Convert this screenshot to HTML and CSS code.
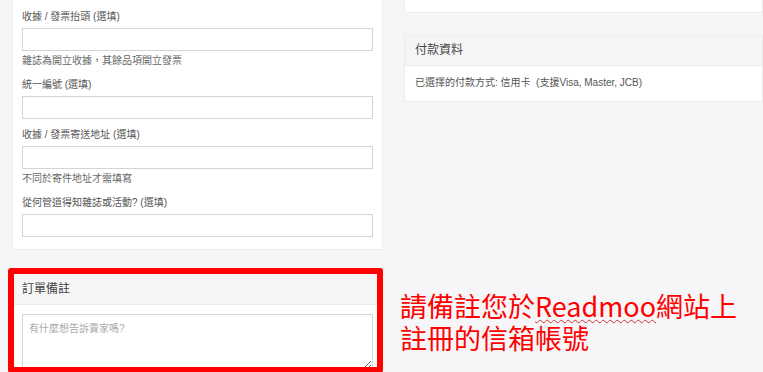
FILE: index.html
```html
<!DOCTYPE html>
<html lang="zh-Hant">
<head>
  <meta charset="UTF-8">
  <title>結帳</title>
  <link rel="stylesheet" href="styles.css">
</head>
<body>
  <div class="page">
    <div class="col-left">
      <div class="card form-card">
        <div class="field">
          <label class="label">收據 / 發票抬頭 (選填)</label>
          <input class="input" type="text">
          <p class="help">雜誌為開立收據，其餘品項開立發票</p>
        </div>
        <div class="field">
          <label class="label">統一編號 (選填)</label>
          <input class="input" type="text">
        </div>
        <div class="field">
          <label class="label">收據 / 發票寄送地址 (選填)</label>
          <input class="input" type="text">
          <p class="help">不同於寄件地址才需填寫</p>
        </div>
        <div class="field">
          <label class="label">從何管道得知雜誌或活動? (選填)</label>
          <input class="input" type="text">
        </div>
      </div>
      <div class="card note-card">
        <div class="card-head">訂單備註</div>
        <div class="card-body">
          <textarea class="textarea" placeholder="有什麼想告訴賣家嗎?"></textarea>
        </div>
        <div class="mark"></div>
      </div>
    </div>
    <div class="col-right">
      <div class="card top-card"></div>
      <div class="card pay-card">
        <div class="card-head">付款資料</div>
        <div class="pay-body">已選擇的付款方式: 信用卡&nbsp; (支援Visa, Master, JCB)</div>
      </div>
      <p class="note">請備註您於<span class="typo">Readmoo</span>網站上<br>註冊的信箱帳號</p>
    </div>
  </div>
</body>
</html>
```
FILE: styles.css
```css
html, body, p, label, input, textarea {
  margin: 0;
  padding: 0;
}
body {
  background: #f6f6f8;
  font-family: "Liberation Sans", "Noto Sans CJK TC", sans-serif;
  color: #555;
}
.page {
  display: grid;
  grid-template-columns: 371px 359px;
  column-gap: 21px;
  padding-left: 12px;
  height: 372px;
  overflow: hidden;
}
.col-left, .col-right {
  display: flex;
  flex-direction: column;
}
.col-left {
  gap: 21px;
}
.card {
  background: #fff;
  border: 1px solid #ececec;
  border-top: 0;
}
.form-card {
  padding: 9px 9px 12px 9px;
}
.field {
  margin-bottom: 8px;
}
.field:last-child {
  margin-bottom: 0;
}
.label {
  display: block;
  font-size: 10px;
  line-height: 16px;
  color: #555;
}
.input {
  display: block;
  box-sizing: border-box;
  width: 100%;
  height: 23px;
  margin-top: 3px;
  border: 1px solid #d4d4d4;
  background: #fff;
}
.help {
  margin-top: 2px;
  font-size: 10px;
  line-height: 16px;
  color: #666;
}
.card-head {
  background: #f5f5f5;
  border-bottom: 1px solid #ececec;
  font-size: 12px;
  color: #444;
  padding: 0 9px;
}
.note-card {
  position: relative;
  border-top: 1px solid #ececec;
  flex: 1;
}
.note-card .card-head {
  height: 32px;
  line-height: 34px;
}
.card-body {
  padding: 9px 9px;
}
.textarea {
  display: block;
  box-sizing: border-box;
  width: 100%;
  height: 56px;
  border: 1px solid #d4d4d4;
  padding: 5px 6px;
  font-family: "Liberation Sans", "Noto Sans CJK TC", sans-serif;
  font-size: 10px;
  color: #555;
}
.textarea::placeholder {
  color: #aaa;
}
/* 標註用紅框 */
.mark {
  position: absolute;
  left: -5px;
  top: -4px;
  right: -1px;
  height: 93px;
  border: 6px solid #ff0000;
  border-radius: 3px;
}
.top-card {
  height: 12px;
}
.pay-card {
  margin-top: 22px;
  border-top: 1px solid #f0f0f0;
}
.pay-card .card-head {
  height: 29px;
  line-height: 29px;
  padding: 0 10px;
}
.pay-body {
  height: 35px;
  line-height: 34px;
  padding: 0 10px;
  font-size: 10px;
  color: #555;
}
.note {
  margin: 188px 0 0 -4px;
  font-family: "Noto Sans CJK TC", sans-serif;
  font-size: 27px;
  line-height: 32px;
  color: #ff0000;
}
.typo {
  text-decoration: underline wavy #c33;
  text-decoration-thickness: 1px;
  text-underline-offset: 2px;
}
```
